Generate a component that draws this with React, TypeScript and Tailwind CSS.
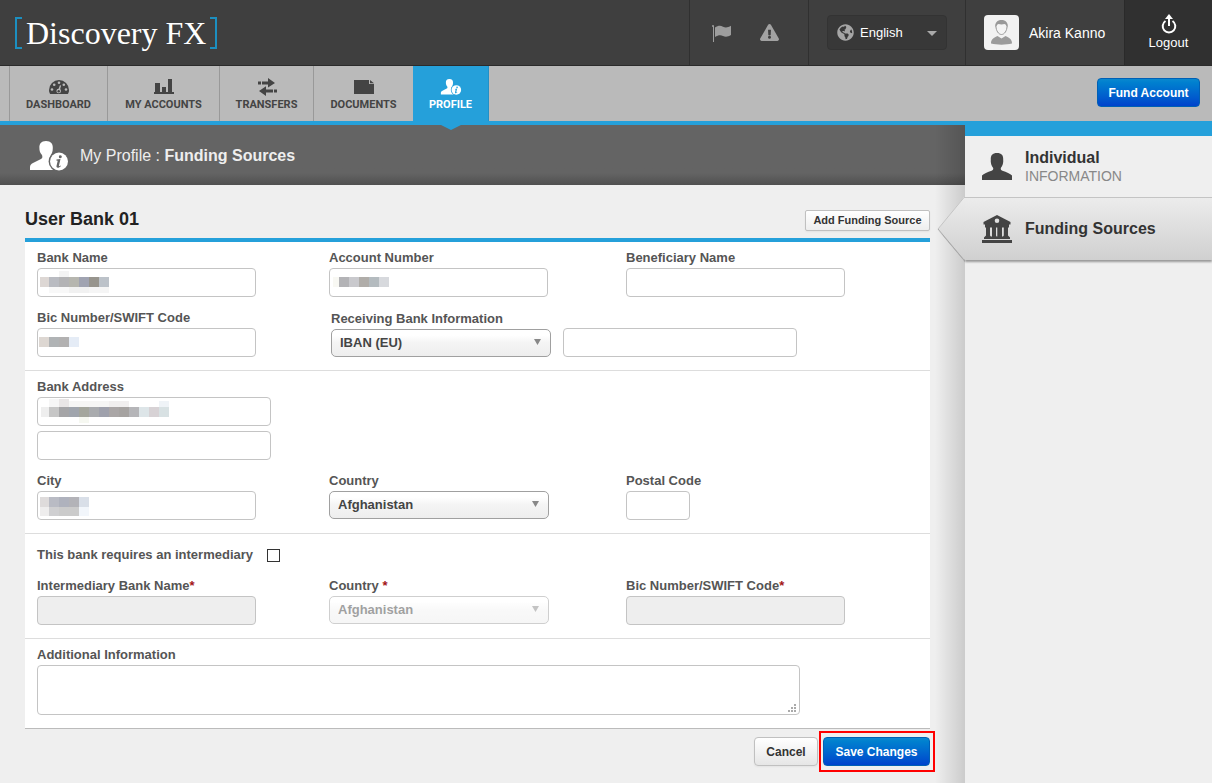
import { useId, useState } from 'react';
import type { ReactNode } from 'react';
import { FaExclamationTriangle, FaGlobeAmericas } from 'react-icons/fa';

type Block = [x: number, y: number, w: number, h: number, fill: string];

const BANK_NAME_MASK: Block[] = [
  [3, 9, 9, 10, '#ddd7d4'],
  [12, 9, 10, 10, '#b9bbc1'],
  [22, 9, 10, 10, '#b3b3b5'],
  [32, 9, 10, 10, '#b6b6af'],
  [42, 9, 10, 10, '#a0a3b1'],
  [52, 9, 10, 10, '#97948d'],
  [62, 9, 10, 10, '#bcc2c9'],
  [22, 3, 10, 6, '#f4f4f4'],
  [12, 19, 20, 6, '#f8f8f8'],
  [32, 19, 20, 6, '#f1f1f1'],
  [52, 19, 20, 6, '#f5f5f5'],
];

const ACCOUNT_MASK: Block[] = [
  [4, 9, 6, 10, '#f8f8f3'],
  [10, 9, 10, 10, '#b3b3b6'],
  [20, 9, 10, 10, '#c9c9cd'],
  [30, 9, 10, 10, '#b0ada9'],
  [40, 9, 10, 10, '#b4bbbf'],
  [50, 9, 10, 10, '#d7d9dd'],
];

const BIC_MASK: Block[] = [
  [2, 9, 10, 10, '#ddd7d2'],
  [12, 9, 10, 10, '#b0b3b5'],
  [22, 9, 10, 10, '#b2b1b1'],
  [32, 9, 10, 10, '#e5ecf6'],
];

const ADDRESS_MASK: Block[] = [
  [4, 10, 8, 10, '#eeeeee'],
  [12, 10, 10, 10, '#c6c6c6'],
  [22, 10, 10, 10, '#a5a5a7'],
  [32, 10, 10, 10, '#a0a5ad'],
  [42, 10, 10, 10, '#a4a69d'],
  [52, 10, 10, 10, '#a9abae'],
  [62, 10, 10, 10, '#9fa1ac'],
  [72, 10, 10, 10, '#aaa6a6'],
  [82, 10, 10, 10, '#a6a3a1'],
  [92, 10, 10, 10, '#b5b5b8'],
  [102, 10, 10, 10, '#dde5e8'],
  [112, 10, 10, 10, '#d7d2d5'],
  [122, 10, 10, 10, '#d8e1e3'],
  [12, 2, 10, 8, '#f6f6f6'],
  [22, 2, 10, 8, '#e9e6e6'],
  [32, 4, 40, 6, '#f6f6f5'],
  [72, 4, 20, 6, '#f1efef'],
  [122, 4, 10, 6, '#eff3f7'],
  [42, 20, 10, 6, '#f6f8f1'],
];

const CITY_MASK: Block[] = [
  [3, 6, 9, 10, '#dedbdb'],
  [12, 6, 10, 10, '#b9bbc4'],
  [22, 6, 10, 10, '#afb2bd'],
  [32, 6, 10, 10, '#b3b3b8'],
  [42, 6, 10, 10, '#d9dfe8'],
  [3, 16, 9, 9, '#eeeded'],
  [12, 16, 10, 9, '#cfcfd1'],
  [22, 16, 20, 9, '#cbcbcb'],
  [42, 16, 10, 9, '#f2f6fb'],
];

function DashboardIcon() {
  return (
    <svg width="20" height="16" viewBox="0 0 20 16" fill="#444">
      <path d="M10 1a10 10 0 0 0-10 10c0 1.600.5 3 1.200 4h17.600c.7-1 1.200-2.400 1.200-4a10 10 0 0 0-10-10z" />
      <g fill="#bababa">
        <circle cx="3" cy="10.500" r="1.300" />
        <circle cx="5.200" cy="5.800" r="1.300" />
        <circle cx="10" cy="3.800" r="1.300" />
        <circle cx="14.800" cy="5.800" r="1.300" />
        <circle cx="17" cy="10.500" r="1.300" />
        <circle cx="9.700" cy="12" r="2.300" />
      </g>
      <path d="M10.900 6.200l1.200.4-1.400 5.500-1.700-.5z" fill="#bababa" />
      <circle cx="9.700" cy="12.200" r="1.200" />
    </svg>
  );
}

function AccountsIcon() {
  return (
    <svg width="20" height="16" viewBox="0 0 20 16" fill="#444">
      <path d="M1 4h5v10H1zM8 8h4v6H8zM14 0h4v14h-4zM0 13h20v2H0z" />
    </svg>
  );
}

function TransfersIcon() {
  return (
    <svg width="20" height="18" viewBox="0 0 20 18" fill="#444">
      <path d="M1 3.500h3v3H1zM5 3.500h6V0l7 4.900-7 4.600v-3H5zM16 11.500H9V8.300L2 13l7 5v-3.500h7zM17 11.500h3v3h-3z" />
    </svg>
  );
}

function DocumentsIcon() {
  return (
    <svg width="20" height="16" viewBox="0 0 20 16" fill="#444">
      <path d="M0 1h15v4h5v10H0zM16 1l4 3.300h-4z" />
    </svg>
  );
}

function ProfileIcon({ className, gap }: { className: string; gap: string }) {
  return (
    <svg className={className} viewBox="0 0 38 30" fill="#fff">
      <path d="M16 0c5 0 7 3 6.800 7 .1 4-1.300 6-2.400 8-.4 2 .1 3 1.600 4l8 4v6H0v-3c0-2 1-3 3-4l8-4c1.600-1 1.600-2 1-4-1.700-2-2.700-4-2.600-7C9.200 3 11 0 16 0z" />
      <circle cx="29" cy="20.500" r="10.400" fill={gap} />
      <circle cx="29" cy="20.500" r="9" />
      <path
        d="M30.400 14.200a1.500 1.500 0 1 1-.1 3 1.500 1.500 0 0 1 .1-3zM26.500 18.600l4-.7-1.600 6.900c-.1.700.6.500 1.500-.4l.5.500c-1.500 2-4.800 2.600-4.400.2l1.200-5.300-1.400-.4z"
        fill={gap}
      />
    </svg>
  );
}

function PersonIcon() {
  return (
    <svg width="30" height="27" viewBox="0 0 30 27" fill="#444">
      <path d="M15 0c4.500 0 6.400 2.400 6.200 6.300.4 3.700-.6 6.500-2.400 8.700-.2 1.500.2 2.200 1.600 2.700 4 1.300 8 2.800 9.600 4.800V27H0v-4.500c1.600-2 5.600-3.500 9.600-4.800 1.400-.5 1.800-1.200 1.600-2.700C9.400 12.800 8.400 10 8.800 6.300 8.600 2.400 10.500 0 15 0z" />
    </svg>
  );
}

function BankIcon() {
  return (
    <svg width="30" height="28" viewBox="0 0 30 28" fill="#444">
      <path
        fillRule="evenodd"
        d="M15 0l13.500 7v2.500h-1.500v3h-1v8l2 2v1.500H2V22.500l2-2v-8H3v-3H1.500V7zM15 3.500a2.300 2.300 0 1 0 0 4.600 2.300 2.300 0 0 0 0-4.600zM8 12.500v8l.8 1h1.200v-9zM14 12.500v8l.5 1h.8v-9zM20 12.500v9h1l.8-1v-8z"
      />
      <path d="M0 25h30v3H0z" />
    </svg>
  );
}

function FlagIcon() {
  return (
    <svg width="20" height="18" viewBox="0 0 20 18" fill="#9d9d9d">
      <path d="M0 1.500L1 1l1 .5V18H1V3L0 2.500zM3 3.500c3-2 5.500-2.200 8-.8 2.500 1.300 5 .8 8-.9V11c-3 1.800-5.500 2.200-8 .9-2.500-1.200-5-.8-8 1z" />
    </svg>
  );
}

function AvatarIcon() {
  return (
    <svg width="35" height="35" viewBox="0 0 35 35">
      <path
        d="M7 28.500c0-4 2-5.500 6.500-7.500l4 2.500 4-2.500c4.500 2 6.500 3.500 6.500 7.500-6 1.500-15 1.500-21 0z"
        fill="#9b9b9b"
      />
      <path
        d="M12 11.500c0-3.500 2-5 5.500-5s5.500 1.500 5.500 5c0 4-2.500 8-5.500 8s-5.500-4-5.500-8z"
        fill="#f4f4f4"
        stroke="#999"
      />
      <path d="M11.500 12.500c-1-5 2-7.500 6-7.500s7 2.500 6 7.500c-.8-2-1.500-3-3-3.500-2 .6-4 .6-6 0-1.500.5-2.200 1.500-3 3.500z" fill="#999" />
    </svg>
  );
}

function LogoutIcon() {
  return (
    <svg width="16" height="20" viewBox="0 0 16 20" fill="none" stroke="#fff" strokeWidth="2">
      <path d="M4.500 7A6.300 6.300 0 1 0 11.500 7M8 12V3" />
      <path d="M8 0l4 5H4z" fill="#fff" stroke="none" />
    </svg>
  );
}

function Label({ htmlFor, children, required }: { htmlFor: string; children: ReactNode; required?: boolean }) {
  return (
    <label htmlFor={htmlFor} className="block text-[13px] leading-5 font-bold whitespace-nowrap text-[#555]">
      {children}
      {required && <span className="text-[#a31515]">*</span>}
    </label>
  );
}

function TextBox({
  id,
  label,
  width = 'w-[219px]',
  mask,
  disabled,
}: {
  id?: string;
  label?: string;
  width?: string;
  mask?: Block[];
  disabled?: boolean;
}) {
  return (
    <div className={`relative max-w-full ${width}`}>
      <input
        id={id}
        aria-label={label}
        type="text"
        disabled={disabled}
        className="block h-[29px] w-full rounded border border-[#c4c4c4] bg-white px-2 text-[13px] text-[#444] disabled:bg-[#eee]"
      />
      {mask && (
        <svg className="pointer-events-none absolute top-0 left-0" width="140" height="29" shapeRendering="crispEdges">
          {mask.map(([x, y, w, h, fill]) => (
            <rect key={`${x}-${y}`} x={x} y={y} width={w} height={h} fill={fill} />
          ))}
        </svg>
      )}
    </div>
  );
}

function SelectBox({ id, options, disabled }: { id: string; options: string[]; disabled?: boolean }) {
  return (
    <div className={`relative w-[220px] max-w-full ${disabled ? 'opacity-50' : ''}`}>
      <select
        id={id}
        disabled={disabled}
        className="block h-7 w-full appearance-none rounded-[5px] border border-[#a0a0a0] bg-linear-to-b from-white from-20% via-[#f4f4f4] via-50% to-[#eee] px-2 text-[13px] font-bold text-[#444]"
      >
        {options.map((option) => (
          <option key={option}>{option}</option>
        ))}
      </select>
      <svg className="pointer-events-none absolute top-2.5 right-2.5" width="7" height="6" fill="#888">
        <path d="M0 0h7L3.500 6z" />
      </svg>
    </div>
  );
}

function Field({
  label,
  required,
  children,
}: {
  label: ReactNode;
  required?: boolean;
  children: (id: string) => ReactNode;
}) {
  const id = useId();
  return (
    <div>
      <Label htmlFor={id} required={required}>
        {label}
      </Label>
      {children(id)}
    </div>
  );
}

function Section({ children }: { children: ReactNode }) {
  return (
    <div className="grid grid-cols-[292fr_297fr_292fr] gap-y-[11px] border-b border-[#ddd] px-3 pt-1.5 pb-[13px] last:border-[#bbb]">
      {children}
    </div>
  );
}

const TABS = [
  { label: 'DASHBOARD', icon: <DashboardIcon />, width: 'w-[98px]' },
  { label: 'MY ACCOUNTS', icon: <AccountsIcon />, width: 'w-28' },
  { label: 'TRANSFERS', icon: <TransfersIcon />, width: 'w-[94px]' },
  { label: 'DOCUMENTS', icon: <DocumentsIcon />, width: 'w-[100px]' },
];

function Header() {
  return (
    <header className="flex h-[66px] justify-between border-b border-[#2b2b2b] bg-[#3f3f3f]">
      <a href="#home" className="mt-[17px] ml-[15px] flex h-8 items-center">
        <span className="h-8 w-[7px] border-2 border-r-0 border-[#1c8fc0]" />
        <span className="px-1 font-['Liberation_Serif',serif] text-[32px] leading-9 whitespace-nowrap text-white">
          Discovery FX
        </span>
        <span className="h-8 w-[7px] border-2 border-l-0 border-[#1c8fc0]" />
      </a>
      <div className="flex">
        <div className="flex w-[119px] items-center gap-7 border-l border-[#303030] pl-[22px]">
          <button type="button" aria-label="Flags">
            <FlagIcon />
          </button>
          <button type="button" aria-label="Warnings">
            <FaExclamationTriangle size={19} color="#a2a2a2" />
          </button>
        </div>
        <div className="flex w-[157px] items-center border-l border-[#303030] pl-[18px]">
          <div className="relative">
            <FaGlobeAmericas className="pointer-events-none absolute top-[9px] left-2.5" size={17} color="#a6a6a6" />
            <select
              aria-label="Language"
              className="h-[35px] w-[120px] appearance-none rounded border border-[#333] bg-[#383838] pl-8 text-[13px] text-white"
            >
              <option>English</option>
              <option>Japanese</option>
            </select>
            <svg className="pointer-events-none absolute top-4 right-2.5" width="10" height="5" fill="#aaa">
              <path d="M0 0h10L5 5z" />
            </svg>
          </div>
        </div>
        <div className="flex w-[159px] items-center gap-2.5 border-l border-[#303030] pl-[18px]">
          <span className="rounded bg-[#f2f2f2]">
            <AvatarIcon />
          </span>
          <a href="#user" className="text-sm whitespace-nowrap text-white">
            Akira Kanno
          </a>
        </div>
        <button
          type="button"
          className="flex w-[88px] flex-col items-center justify-center border-l border-[#2a2a2a] bg-[#303030] text-[13px] leading-[18px] text-white"
        >
          <LogoutIcon />
          Logout
        </button>
      </div>
    </header>
  );
}

function Navigation() {
  return (
    <nav className="flex h-[59px] items-start justify-between border-b-4 border-[#25a0da] bg-[#bababa] pl-[9px] font-['Roboto',sans-serif] text-[11px] leading-4 font-bold text-[#444]">
      <div className="flex h-[55px]">
        {TABS.map((tab) => (
          <a
            key={tab.label}
            href={`#${tab.label.toLowerCase()}`}
            className={`flex flex-col items-center border-l border-[#999] pt-2.5 ${tab.width}`}
          >
            <span className="flex h-[21px] items-center">{tab.icon}</span>
            {tab.label}
          </a>
        ))}
        <a
          href="#profile"
          aria-current="page"
          className="relative flex w-[76px] flex-col items-center border-r border-[#2490c5] bg-[#25a0da] pt-2.5 text-white"
        >
          <span className="flex h-[21px] items-center">
            <ProfileIcon className="h-4 w-[22px]" gap="#25a0da" />
          </span>
          PROFILE
          <svg className="absolute -bottom-[9px] left-7 z-10" width="20" height="5" fill="#25a0da">
            <path d="M0 0h20L10 5z" />
          </svg>
        </a>
      </div>
      <button
        type="button"
        className="mt-3 mr-3 h-[29px] w-[103px] rounded border border-[#0060b5] bg-linear-to-b from-[#0a88cf] to-[#0042cc] font-['Liberation_Sans',sans-serif] text-xs font-bold text-white"
      >
        Fund Account
      </button>
    </nav>
  );
}

function BankForm() {
  const [intermediary, setIntermediary] = useState(false);
  const infoId = useId();

  return (
    <form className="pt-[25px] pr-[35px] pb-[17px] pl-[25px]" onSubmit={(e) => e.preventDefault()}>
      <div className="flex items-start justify-between pb-[7px]">
        <h2 className="text-lg leading-[18px] font-bold text-[#222]">User Bank 01</h2>
        <button
          type="button"
          className="h-[21px] w-[125px] rounded-xs border border-[#c0c0c0] bg-linear-to-b from-white to-[#eee] text-[11px] font-bold whitespace-nowrap text-[#333] shadow-xs"
        >
          Add Funding Source
        </button>
      </div>

      <div className="border-t-4 border-[#25a0da] bg-white">
        <Section>
          <Field label="Bank Name">{(id) => <TextBox id={id} mask={BANK_NAME_MASK} />}</Field>
          <Field label="Account Number">{(id) => <TextBox id={id} mask={ACCOUNT_MASK} />}</Field>
          <Field label="Beneficiary Name">{(id) => <TextBox id={id} />}</Field>
          <Field label="Bic Number/SWIFT Code">{(id) => <TextBox id={id} mask={BIC_MASK} />}</Field>
          <div className="col-span-2 flex items-end gap-3 pl-0.5">
            <Field label="Receiving Bank Information">
              {(id) => <SelectBox id={id} options={['IBAN (EU)', 'ABA (US)']} />}
            </Field>
            <TextBox label="Receiving bank value" width="w-[234px]" />
          </div>
        </Section>

        <Section>
          <div className="col-span-3 flex flex-col gap-[5px]">
            <Field label="Bank Address">{(id) => <TextBox id={id} width="w-[234px]" mask={ADDRESS_MASK} />}</Field>
            <TextBox label="Bank address line 2" width="w-[234px]" />
          </div>
          <Field label="City">{(id) => <TextBox id={id} mask={CITY_MASK} />}</Field>
          <Field label="Country">{(id) => <SelectBox id={id} options={['Afghanistan', 'Albania']} />}</Field>
          <Field label="Postal Code">{(id) => <TextBox id={id} width="w-16" />}</Field>
        </Section>

        <Section>
          <label className="col-span-3 flex items-center gap-3.5 pt-[5px] text-[13px] leading-5 font-bold text-[#555]">
            This bank requires an intermediary
            <input
              type="checkbox"
              checked={intermediary}
              onChange={(e) => setIntermediary(e.target.checked)}
              className="size-[13px] appearance-none border border-[#333] bg-white checked:bg-[#333]"
            />
          </label>
          <Field label="Intermediary Bank Name" required>
            {(id) => <TextBox id={id} disabled={!intermediary} />}
          </Field>
          <Field label="Country " required>
            {(id) => <SelectBox id={id} options={['Afghanistan', 'Albania']} disabled={!intermediary} />}
          </Field>
          <Field label="Bic Number/SWIFT Code" required>
            {(id) => <TextBox id={id} disabled={!intermediary} />}
          </Field>
        </Section>

        <Section>
          <div className="col-span-3">
            <Label htmlFor={infoId}>Additional Information</Label>
            <div className="relative w-[763px] max-w-full">
              <textarea
                id={infoId}
                className="block h-[50px] w-full resize-none rounded border border-[#c4c4c4] bg-white p-2 text-[13px]"
              />
              <svg className="pointer-events-none absolute right-1 bottom-[3px]" width="8" height="8" fill="#aaa">
                <path d="M6 0h2v2H6zM3 3h2v2H3zM6 3h2v2H6zM0 6h2v2H0zM3 6h2v2H3zM6 6h2v2H6z" />
              </svg>
            </div>
          </div>
        </Section>
      </div>

      <div className="mt-2 flex justify-end gap-[5px] text-xs font-bold">
        <button
          type="button"
          className="h-[29px] w-16 rounded border border-[#c0c0c0] bg-linear-to-b from-white to-[#e6e6e6] text-[#333] shadow-xs"
        >
          Cancel
        </button>
        <div className="relative">
          <button
            type="submit"
            className="h-[29px] w-[107px] rounded border border-[#0060b5] bg-linear-to-b from-[#0a88cf] to-[#0042cc] text-white"
          >
            Save Changes
          </button>
          <span className="pointer-events-none absolute -inset-y-1.5 -right-[5px] -left-1 border-2 border-[#f00]" />
        </div>
      </div>
    </form>
  );
}

function Sidebar() {
  return (
    <aside className="w-[247px] shrink-0 border-t-[11px] border-[#25a0da] bg-[#efefef] text-base text-[#333]">
      <a href="#individual" className="flex h-[61px] items-center gap-[13px] pl-[17px]">
        <PersonIcon />
        <span className="leading-[18px]">
          <b className="block">Individual</b>
          <span className="block text-sm leading-[18px] text-[#888]">INFORMATION</span>
        </span>
      </a>
      <a
        href="#funding"
        aria-current="page"
        className="relative flex h-[63px] items-center gap-[13px] border-t border-[#c4c4c4] bg-linear-to-b from-[#ececec] to-[#d0d0d0] pl-[17px] font-bold shadow-[0_2px_2px_#999]"
      >
        <svg className="absolute -top-px -left-7" width="28" height="66" viewBox="0 0 28 66">
          <defs>
            <linearGradient id="pointer" x2="0" y2="1">
              <stop stopColor="#ececec" />
              <stop offset="1" stopColor="#d0d0d0" />
            </linearGradient>
          </defs>
          <path d="M1 33L28 65v-3z" fill="#888" opacity=".7" />
          <path d="M28 0v63h-1L1 32 27 0z" fill="url(#pointer)" />
          <path d="M28 .5h-1L1 32" fill="none" stroke="#c4c4c4" />
          <path d="M1 32l26 31h1" fill="none" stroke="#aaa" />
        </svg>
        <BankIcon />
        Funding Sources
      </a>
    </aside>
  );
}

export default function App() {
  return (
    <div className="flex min-h-screen flex-col bg-[#efefef] font-['Liberation_Sans',Arial,sans-serif]">
      <Header />
      <Navigation />
      <div className="flex grow">
        <main className="relative min-w-0 grow">
          <div className="flex h-[60px] items-center gap-3 bg-linear-to-b from-[#646464] from-80% to-[#505050] pt-0.5 pl-[30px]">
            <ProfileIcon className="h-[30px] w-[38px]" gap="#646464" />
            <h1 className="text-base text-[#eee]">
              My Profile : <b>Funding Sources</b>
            </h1>
          </div>
          <BankForm />
          <div className="pointer-events-none absolute inset-y-0 right-0 w-[30px] bg-linear-to-r from-transparent to-black/15" />
        </main>
        <Sidebar />
      </div>
    </div>
  );
}
